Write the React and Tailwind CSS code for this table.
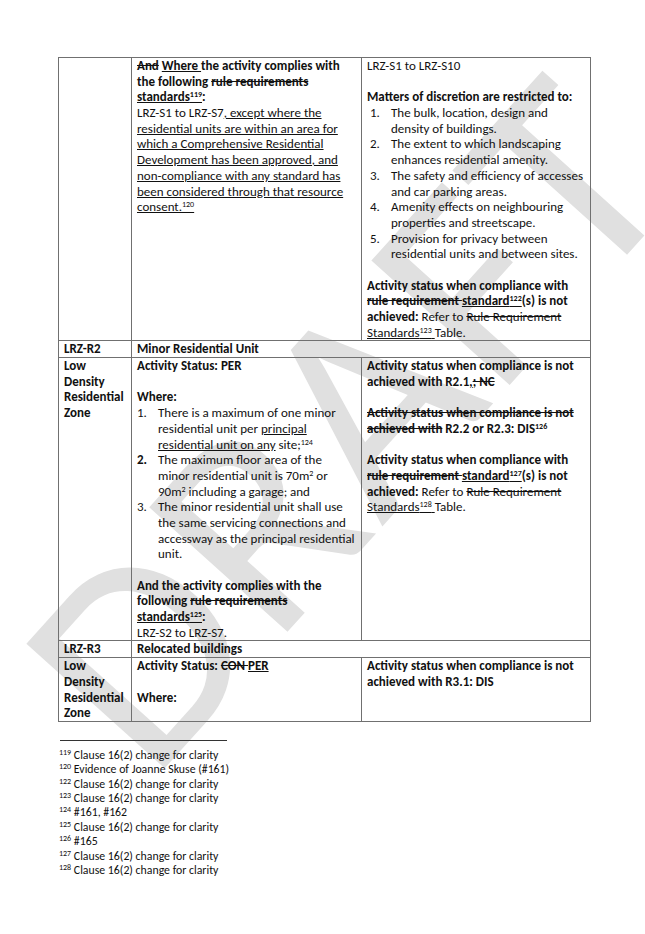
const L = ({ children, className = '' }) => (
  <div className={`h-[15.7px] leading-[15.7px] whitespace-nowrap ${className}`}>{children}</div>
)

const Blank = () => <div className="h-[15.7px]" />

const Sup = ({ children }) => <sup className="text-[8px]">{children}</sup>

const Item = ({ n, lines, indent = 'pl-0' }) => (
  <div className={`flex ${indent}`}>
    <div className="w-[21px] shrink-0 h-[15.7px] leading-[15.7px]">{n}</div>
    <div>
      {lines.map((l, i) => (
        <L key={i}>{l}</L>
      ))}
    </div>
  </div>
)

const Zone = () => (
  <div className="font-bold">
    <L>Low</L>
    <L>Density</L>
    <L>Residential</L>
    <L>Zone</L>
  </div>
)

const td = 'border border-[#707070] align-top pl-[5px] pr-[3px] py-0'

const FOOTNOTES = [
  ['119', 'Clause 16(2) change for clarity'],
  ['120', 'Evidence of Joanne Skuse (#161)'],
  ['122', 'Clause 16(2) change for clarity'],
  ['123', 'Clause 16(2) change for clarity'],
  ['124', '#161, #162'],
  ['125', 'Clause 16(2) change for clarity'],
  ['126', '#165'],
  ['127', 'Clause 16(2) change for clarity'],
  ['128', 'Clause 16(2) change for clarity'],
]

export default function App() {
  return (
    <div
      className="relative w-[645px] h-[934px] overflow-hidden bg-white text-[#111] text-[13px]"
      style={{ fontFamily: 'Carlito, Lato, "Open Sans", sans-serif' }}
    >
      {/* DRAFT watermark */}
      <div className="absolute left-[345px] top-[420px] -translate-x-1/2 -translate-y-1/2 -rotate-[48deg] text-[290px] leading-none text-[#e0e0e0] font-normal tracking-[4px] whitespace-nowrap select-none pointer-events-none">
        DRAFT
      </div>

      <div className="relative pl-[58px] pt-[57px]">
        <table className="table-fixed border-collapse w-[532px]">
          <colgroup>
            <col className="w-[73px]" />
            <col className="w-[230px]" />
            <col className="w-[229px]" />
          </colgroup>
          <tbody>
            <tr>
              <td className={td}></td>
              <td className={td}>
                <L className="font-bold">
                  <s>And</s> <u>Where </u>the activity complies with
                </L>
                <L className="font-bold">
                  the following <s>rule requirements</s>
                </L>
                <L className="font-bold">
                  <u>
                    standards<Sup>119</Sup>
                  </u>
                  :
                </L>
                <L>
                  LRZ-S1 to LRZ-S7<u>, except where the</u>
                </L>
                <L>
                  <u>residential units are within an area for</u>
                </L>
                <L>
                  <u>which a Comprehensive Residential</u>
                </L>
                <L>
                  <u>Development has been approved, and</u>
                </L>
                <L>
                  <u>non-compliance with any standard has</u>
                </L>
                <L>
                  <u>been considered through that resource</u>
                </L>
                <L>
                  <u>
                    consent.<Sup>120</Sup>
                  </u>
                </L>
              </td>
              <td className={td}>
                <L>LRZ-S1 to LRZ-S10</L>
                <Blank />
                <L className="font-bold">Matters of discretion are restricted to:</L>
                <Item indent="pl-[3px]" n="1." lines={['The bulk, location, design and', 'density of buildings.']} />
                <Item indent="pl-[3px]" n="2." lines={['The extent to which landscaping', 'enhances residential amenity.']} />
                <Item indent="pl-[3px]" n="3." lines={['The safety and efficiency of accesses', 'and car parking areas.']} />
                <Item indent="pl-[3px]" n="4." lines={['Amenity effects on neighbouring', 'properties and streetscape.']} />
                <Item indent="pl-[3px]" n="5." lines={['Provision for privacy between', 'residential units and between sites.']} />
                <Blank />
                <L className="font-bold">Activity status when compliance with</L>
                <L className="font-bold">
                  <s>rule requirement </s>
                  <u>
                    standard<Sup>122</Sup>
                  </u>
                  (s) is not
                </L>
                <L>
                  <b>achieved:</b> Refer to <s>Rule Requirement</s>
                </L>
                <L>
                  <u>
                    Standards<Sup>123</Sup>{' '}
                  </u>
                  Table.
                </L>
              </td>
            </tr>

            <tr>
              <td className={`${td} font-bold`}>
                <L>LRZ-R2</L>
              </td>
              <td className={`${td} font-bold`} colSpan={2}>
                <L>Minor Residential Unit</L>
              </td>
            </tr>

            <tr>
              <td className={td}>
                <Zone />
              </td>
              <td className={td}>
                <L className="font-bold">Activity Status: PER</L>
                <Blank />
                <L className="font-bold">Where:</L>
                <Item
                  n="1."
                  lines={[
                    'There is a maximum of one minor',
                    <>
                      residential unit per <u>principal</u>
                    </>,
                    <>
                      <u>residential unit on any</u> site;<Sup>124</Sup>
                    </>,
                  ]}
                />
                <Item
                  n={<span className="font-semibold">2.</span>}
                  lines={[
                    'The maximum floor area of the',
                    <>
                      minor residential unit is 70m<Sup>2</Sup> or
                    </>,
                    <>
                      90m<Sup>2</Sup> including a garage; and
                    </>,
                  ]}
                />
                <Item
                  n="3."
                  lines={[
                    'The minor residential unit shall use',
                    'the same servicing connections and',
                    'accessway as the principal residential',
                    'unit.',
                  ]}
                />
                <Blank />
                <L className="font-bold">And the activity complies with the</L>
                <L className="font-bold">
                  following <s>rule requirements</s>
                </L>
                <L className="font-bold">
                  <u>
                    standards<Sup>125</Sup>
                  </u>
                  :
                </L>
                <L>LRZ-S2 to LRZ-S7.</L>
              </td>
              <td className={td}>
                <L className="font-bold">Activity status when compliance is not</L>
                <L className="font-bold">
                  achieved with R2.1<u>,</u>
                  <s>; NC</s>
                </L>
                <Blank />
                <L className="font-bold">
                  <s>Activity status when compliance is not</s>
                </L>
                <L className="font-bold">
                  <s>achieved with</s> R2.2 or R2.3: DIS<Sup>126</Sup>
                </L>
                <Blank />
                <L className="font-bold">Activity status when compliance with</L>
                <L className="font-bold">
                  <s>rule requirement </s>
                  <u>
                    standard<Sup>127</Sup>
                  </u>
                  (s) is not
                </L>
                <L>
                  <b>achieved:</b> Refer to <s>Rule Requirement</s>
                </L>
                <L>
                  <u>
                    Standards<Sup>128</Sup>{' '}
                  </u>
                  Table.
                </L>
              </td>
            </tr>

            <tr>
              <td className={`${td} font-bold`}>
                <L>LRZ-R3</L>
              </td>
              <td className={`${td} font-bold`} colSpan={2}>
                <L>Relocated buildings</L>
              </td>
            </tr>

            <tr>
              <td className={td}>
                <Zone />
              </td>
              <td className={td}>
                <L className="font-bold">
                  Activity Status: <s>CON </s>
                  <u>PER</u>
                </L>
                <Blank />
                <L className="font-bold">Where:</L>
              </td>
              <td className={td}>
                <L className="font-bold">Activity status when compliance is not</L>
                <L className="font-bold">achieved with R3.1: DIS</L>
              </td>
            </tr>
          </tbody>
        </table>

        <div className="mt-[18px] ml-[2px] w-[167px] border-t border-[#333]" />
        <div className="pt-[7px] pl-[1px] text-[11.8px]">
          {FOOTNOTES.map(([n, t]) => (
            <div key={n} className="h-[14.4px] leading-[14.4px] whitespace-nowrap">
              <sup className="text-[8px]">{n}</sup> {t}
            </div>
          ))}
        </div>
      </div>
    </div>
  )
}
